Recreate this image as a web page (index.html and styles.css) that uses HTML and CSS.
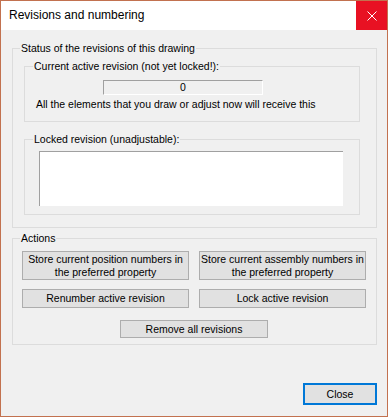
FILE: index.html
```html
<!DOCTYPE html>
<html lang="en">
<head>
    <meta charset="UTF-8">
    <title>Revisions and numbering</title>
    <link rel="stylesheet" href="styles.css">
</head>
<body>
    <div class="window">
        <div class="titlebar">
            <span class="title">Revisions and numbering</span>
            <button class="close-x" aria-label="Close">
                <svg width="10" height="10" viewBox="0 0 10 10">
                    <path d="M0.5 0.5 L9.5 9.5 M9.5 0.5 L0.5 9.5" stroke="#fff" stroke-width="1" fill="none"/>
                </svg>
            </button>
        </div>

        <div class="content">
            <fieldset class="group">
                <legend>Status of the revisions of this drawing</legend>
                <div class="group-body status-body">
                    <fieldset class="group inner">
                        <legend>Current active revision (not yet locked!):</legend>
                        <div class="group-body active-body">
                            <div class="revision-field">0</div>
                            <p class="note">All the elements that you draw or adjust now will receive this</p>
                        </div>
                    </fieldset>

                    <fieldset class="group inner locked">
                        <legend>Locked revision (unadjustable):</legend>
                        <div class="group-body locked-body">
                            <textarea class="locked-list" readonly></textarea>
                        </div>
                    </fieldset>
                </div>
            </fieldset>

            <fieldset class="group actions">
                <legend>Actions</legend>
                <div class="group-body actions-body">
                    <div class="btn-row">
                        <button class="btn tall">Store current position numbers in the preferred property</button>
                        <button class="btn tall">Store current assembly numbers in the preferred property</button>
                    </div>
                    <div class="btn-row second">
                        <button class="btn">Renumber active revision</button>
                        <button class="btn">Lock active revision</button>
                    </div>
                    <div class="btn-row center">
                        <button class="btn remove">Remove all revisions</button>
                    </div>
                </div>
            </fieldset>

            <div class="footer">
                <button class="btn close-btn">Close</button>
            </div>
        </div>
    </div>
</body>
</html>
```

FILE: styles.css
```css
body {
    margin: 0;
    background-color: #f0f0f0;
    font-family: "Liberation Sans", Arial, sans-serif;
    font-size: 10.5px;
    line-height: 13px;
    color: #000;
}
.window {
    width: 388px;
    height: 417px;
    box-sizing: border-box;
    border: 1px solid #c2714f;
    background-color: #f0f0f0;
    display: flex;
    flex-direction: column;
}
.titlebar {
    height: 29px;
    background-color: #fff;
    display: flex;
    align-items: center;
    justify-content: space-between;
}
.title {
    padding-left: 8px;
    font-size: 12px;
    line-height: 29px;
}
.close-x {
    width: 31px;
    height: 29px;
    border: none;
    padding: 0;
    background-color: #e81123;
    display: flex;
    align-items: center;
    justify-content: center;
}
.content {
    flex: 1;
    display: flex;
    flex-direction: column;
    padding: 12px 10px 11px 11px;
}
.group {
    margin: 0;
    padding: 0;
    border: 1px solid #dcdcdc;
    min-width: 0;
}
.group legend {
    padding: 0 1px;
    margin-left: 7px;
    line-height: 13px;
}
.group.inner legend {
    margin-left: 8px;
}
.status-body {
    padding: 5px 16px 12px 11px;
}
.active-body {
    padding: 7px 10px 10px 11px;
}
.revision-field {
    width: 160px;
    height: 15px;
    box-sizing: border-box;
    margin-left: 67px;
    border-top: 1px solid #a0a0a0;
    border-left: 1px solid #a0a0a0;
    border-right: 1px solid #fff;
    border-bottom: 1px solid #fff;
    text-align: center;
    line-height: 13px;
}
.note {
    margin: 3px 0 0;
}
.group.locked {
    margin-top: 11px;
}
.locked-body {
    padding: 5px 0 8px 14px;
}
.locked-list {
    display: block;
    width: 304px;
    height: 55px;
    box-sizing: border-box;
    margin: 0;
    padding: 0;
    resize: none;
    background-color: #fff;
    border-top: 1px solid #a0a0a0;
    border-left: 1px solid #a0a0a0;
    border-right: none;
    border-bottom: none;
    outline: none;
}
.group.actions {
    margin-top: 4px;
}
.actions-body {
    padding: 6px 10px 6px 9px;
}
.btn-row {
    display: flex;
    gap: 10px;
}
.btn-row.second {
    margin-top: 9px;
}
.btn-row.center {
    margin-top: 12px;
    justify-content: center;
}
.btn {
    font-family: "Liberation Sans", Arial, sans-serif;
    font-size: 10.5px;
    line-height: 13px;
    color: #000;
    background-color: #e1e1e1;
    border: 1px solid #adadad;
    border-radius: 0;
    padding: 0;
    width: 167px;
    height: 19px;
    box-sizing: border-box;
}
.btn.tall {
    height: 29px;
}
.btn.remove {
    width: 148px;
    height: 18px;
}
.footer {
    margin-top: auto;
    display: flex;
    justify-content: flex-end;
}
.close-btn {
    width: 74px;
    height: 22px;
    border: 2px solid #0078d7;
}
```
